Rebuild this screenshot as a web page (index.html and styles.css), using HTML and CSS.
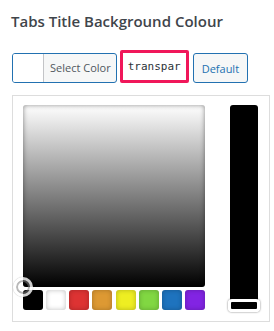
FILE: index.html
```html
<!DOCTYPE html>
<html lang="en">
<head>
    <meta charset="UTF-8">
    <title>Tabs Title Background Colour</title>
    <link rel="stylesheet" href="styles.css">
</head>
<body>
    <div class="control">
        <h2 class="control-title">Tabs Title Background Colour</h2>

        <div class="picker-row">
            <button class="color-result">
                <span class="color-swatch"></span>
                <span class="color-result-text">Select Color</span>
            </button>
            <input class="color-input" type="text" value="transparent">
            <button class="default-btn">Default</button>
        </div>

        <div class="iris-picker">
            <div class="iris-left">
                <div class="iris-square">
                    <span class="square-handle"></span>
                </div>
                <div class="iris-palette">
                    <span class="palette-item" style="background: #000000;"></span>
                    <span class="palette-item" style="background: #ffffff;"></span>
                    <span class="palette-item" style="background: #dd3333;"></span>
                    <span class="palette-item" style="background: #dd9933;"></span>
                    <span class="palette-item" style="background: #eeee22;"></span>
                    <span class="palette-item" style="background: #81d742;"></span>
                    <span class="palette-item" style="background: #1e73be;"></span>
                    <span class="palette-item" style="background: #8224e3;"></span>
                </div>
            </div>
            <div class="iris-slider">
                <span class="slider-handle"></span>
            </div>
        </div>
    </div>
</body>
</html>
```

FILE: styles.css
```css
/* General Styles */
body {
    margin: 0;
    padding: 0;
    background: #ffffff;
    font-family: 'Open Sans', 'Noto Sans', sans-serif;
}

.control {
    padding: 10px 12px 0 12px;
}

.control-title {
    margin: 0 0 0 -1px;
    font-size: 15px;
    font-weight: 600;
    line-height: 23px;
    color: #3f454b;
}

/* Button row */
.picker-row {
    display: flex;
    align-items: flex-end;
    margin-top: 17px;
}

.color-result {
    display: flex;
    height: 30px;
    padding: 0;
    border: 1px solid #2271b1;
    border-radius: 3px;
    background: #f6f7f7;
    overflow: hidden;
    cursor: pointer;
}

.color-swatch {
    width: 30px;
    height: 100%;
    background: #ffffff;
    border-right: 1px solid #c3c4c7;
}

.color-result-text {
    padding: 0 5px 0 6px;
    font-family: 'Open Sans', 'Noto Sans', sans-serif;
    font-size: 11px;
    line-height: 28px;
    color: #50575e;
}

.color-input {
    box-sizing: border-box;
    width: 69px;
    height: 33px;
    margin-left: 3px;
    padding: 0 5px;
    border: 3px solid #f0175a;
    border-radius: 2px;
    font-family: 'DejaVu Sans Mono', monospace;
    font-size: 11px;
    color: #2c3338;
    outline: none;
}

.default-btn {
    height: 30px;
    margin-left: 4px;
    padding: 0 8px;
    border: 1px solid #2271b1;
    border-radius: 3px;
    background: #f6f7f7;
    font-family: 'Open Sans', 'Noto Sans', sans-serif;
    font-size: 11px;
    color: #2271b1;
    cursor: pointer;
}

/* Iris picker */
.iris-picker {
    display: flex;
    justify-content: space-between;
    width: 258px;
    height: 227px;
    box-sizing: border-box;
    margin-top: 12px;
    padding: 9px 11px 0 10px;
    border: 1px solid #dddddd;
}

.iris-left {
    width: 182px;
}

.iris-square {
    position: relative;
    width: 182px;
    height: 182px;
    border-radius: 3px;
    background: linear-gradient(to bottom, #ffffff, #000000);
    box-shadow: inset 0 0 5px rgba(0, 0, 0, 0.45);
}

.square-handle {
    position: absolute;
    left: -7px;
    bottom: -7px;
    width: 10px;
    height: 10px;
    border: 2px solid rgba(128, 128, 128, 0.55);
    border-radius: 50%;
}

.square-handle::after {
    content: "";
    position: absolute;
    top: -5px;
    right: -5px;
    bottom: -5px;
    left: -5px;
    border: 3px solid rgba(255, 255, 255, 0.8);
    border-radius: 50%;
    box-shadow: 0 0 1px rgba(0, 0, 0, 0.4);
}

.iris-palette {
    display: flex;
    justify-content: space-between;
    margin-top: 3px;
}

.palette-item {
    width: 20px;
    height: 20px;
    border-radius: 3px;
    box-shadow: inset 0 0 5px rgba(0, 0, 0, 0.25);
}

.iris-slider {
    position: relative;
    width: 28px;
    height: 204px;
    border-radius: 3px 3px 0 0;
    background: #000000;
}

.slider-handle {
    position: absolute;
    left: -2px;
    right: -2px;
    bottom: -3px;
    height: 7px;
    border: 3px solid #ffffff;
    border-radius: 4px;
    box-shadow: 0 0 2px rgba(0, 0, 0, 0.6);
}
```
